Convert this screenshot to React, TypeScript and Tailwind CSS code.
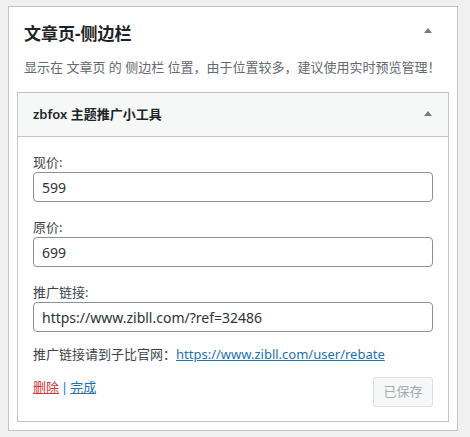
import React from 'react';

const font = '"Noto Sans", "Noto Sans CJK SC", sans-serif';

const Arrow: React.FC<{ className?: string }> = ({ className }) => (
  <svg width="8" height="5" viewBox="0 0 8 5" className={className}>
    <polygon points="0,5 4,0 8,5" fill="#787c82" />
  </svg>
);

interface FieldProps {
  label: string;
  value: string;
}

const Field: React.FC<FieldProps> = ({ label, value }) => (
  <div className="mt-[16px] first:mt-0">
    <label className="block text-[13px] leading-[18px] text-[#3c434a]">{label}</label>
    <input
      type="text"
      defaultValue={value}
      className="mt-px block h-[30px] w-full rounded-[4px] border border-[#8c8f94] bg-white px-[8px] text-[14px] text-[#2c3338] outline-none"
    />
  </div>
);

export default function App() {
  return (
    <div className="min-h-[437px] bg-[#f0f0f1] px-[8px] pt-[6px] pb-[6px]" style={{ fontFamily: font }}>
      <div className="w-[450px] border border-[#c3c4c7] bg-white">
        <div className="flex items-center justify-between pl-[15px] pr-[25px] pt-[15px]">
          <h3 className="text-[17px] font-bold leading-[24px] text-[#1d2327]">文章页-侧边栏</h3>
          <Arrow className="mb-[7px]" />
        </div>
        <p className="mt-[11px] px-[15px] text-[13px] leading-[20px] text-[#646970]">
          显示在 文章页 的 侧边栏 位置，由于位置较多，建议使用实时预览管理！
        </p>

        <div className="mx-[8px] mt-[15px] mb-[8px] border border-[#c3c4c7]">
          <div className="flex h-[44px] items-center justify-between border-b border-[#c3c4c7] bg-[#f6f7f7] pl-[15px] pr-[16px]">
            <span className="text-[13px] font-semibold text-[#1d2327]">zbfox 主题推广小工具</span>
            <Arrow className="mb-[3px]" />
          </div>

          <div className="px-[15px] pt-[16px] pb-[14px]">
            <Field label="现价:" value="599" />
            <Field label="原价:" value="699" />
            <Field label="推广链接:" value="https://www.zibll.com/?ref=32486" />

            <p className="mt-[12px] text-[13px] leading-[20px] text-[#3c434a]">
              推广链接请到子比官网：
              <a href="#" className="text-[#2271b1] underline">https://www.zibll.com/user/rebate</a>
            </p>

            <div className="mt-[13px] flex items-start justify-between">
              <div className="flex text-[13px] leading-[20px]">
                <a href="#" className="text-[#d63638] underline">删除</a>
                <span className="mx-[2px] text-[#2271b1]">|</span>
                <a href="#" className="text-[#2271b1] underline">完成</a>
              </div>
              <button
                disabled
                className="h-[30px] w-[60px] rounded-[3px] border border-[#dcdcde] bg-[#f6f7f7] text-[13px] text-[#a7aaad]"
              >
                已保存
              </button>
            </div>
          </div>
        </div>
      </div>
    </div>
  );
}
